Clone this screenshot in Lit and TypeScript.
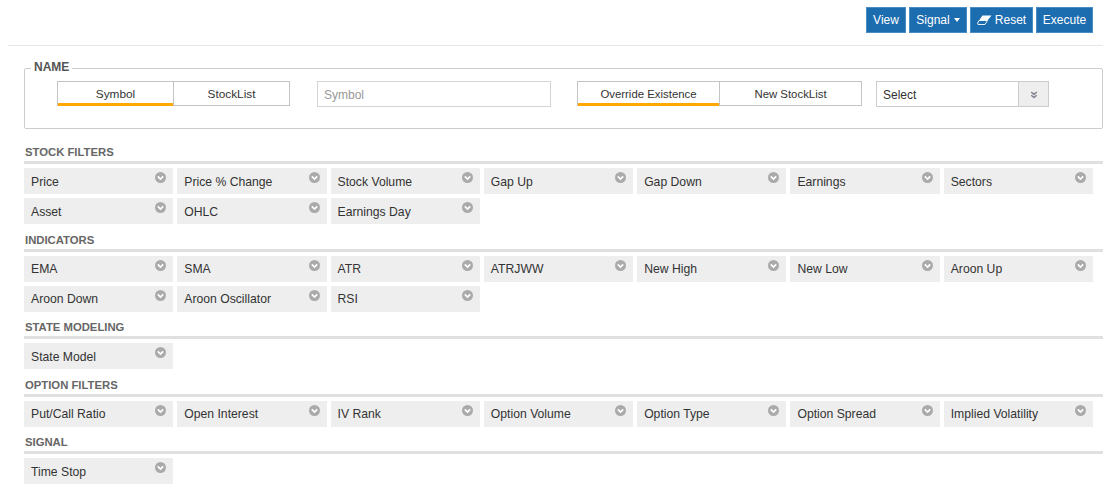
import { LitElement, html, css, svg } from "lit";
import { customElement } from "lit/decorators.js";

const sections: [string, string[]][] = [
  ["STOCK FILTERS", ["Price", "Price % Change", "Stock Volume", "Gap Up", "Gap Down", "Earnings", "Sectors", "Asset", "OHLC", "Earnings Day"]],
  ["INDICATORS", ["EMA", "SMA", "ATR", "ATRJWW", "New High", "New Low", "Aroon Up", "Aroon Down", "Aroon Oscillator", "RSI"]],
  ["STATE MODELING", ["State Model"]],
  ["OPTION FILTERS", ["Put/Call Ratio", "Open Interest", "IV Rank", "Option Volume", "Option Type", "Option Spread", "Implied Volatility"]],
  ["SIGNAL", ["Time Stop"]],
];

@customElement("app-root")
export class AppRoot extends LitElement {
  static styles = css`
    :host { display: block; font-family: "Liberation Sans", Arial, sans-serif; font-size: 12px; color: #333; }
    .top { display: flex; justify-content: flex-end; gap: 3px; padding: 7px 10px 12px 0; margin: 0 6px 0 8px; border-bottom: 1px solid #e6e6e6; }
    .btn { height: 26px; box-sizing: border-box; background: #1c6cb0; border: 1px solid #4a8cc4; color: #fff; font-size: 12px; display: flex; align-items: center; justify-content: center; gap: 3px; }
    .view { width: 40px; }
    .signal { width: 58px; }
    .reset { width: 63px; }
    .execute { width: 57px; }
    .caret { width: 0; height: 0; border-left: 3.5px solid transparent; border-right: 3.5px solid transparent; border-top: 4px solid #fff; margin-left: 1px; }
    fieldset { margin: 14px 6px 0 24px; padding: 0; height: 69px; box-sizing: border-box; border: 1px solid #ccc; border-radius: 2px; display: block; min-width: 0; }
    legend { font-weight: bold; font-size: 12px; color: #555; padding: 0 3px 3px 3px; margin-left: 6px; line-height: 14px; }
    .row { display: flex; align-items: flex-start; margin-top: 4px; }
    .seg { display: flex; box-sizing: border-box; height: 25px; border: 1px solid #c4c4c4; background: #fff; }
    .seg > div { display: flex; align-items: center; justify-content: center; box-sizing: border-box; color: #333; }
    .seg > div + div { border-left: 1px solid #c4c4c4; }
    .seg .on { border-bottom: 3px solid #ffa800; padding-top: 3px; height: 24px; }
    .seg1 { margin-left: 32px; width: 233px; font-size: 11.8px; }
    .seg1 > div:first-child { width: 115px; }
    .seg1 > div:last-child { flex: 1; }
    .seg2 { margin-left: 26px; width: 285px; font-size: 11.4px; }
    .seg2 > div:first-child { width: 141px; }
    .seg2 > div:last-child { flex: 1; }
    .input { margin-left: 27px; width: 234px; height: 26px; box-sizing: border-box; border: 1px solid #d4d4d4; color: #999; padding: 1px 6px 0; display: flex; align-items: center; font-size: 12px; }
    .select { margin-left: 14px; width: 173px; height: 26px; box-sizing: border-box; border: 1px solid #ccc; display: flex; }
    .select .v { flex: 1; display: flex; align-items: center; padding: 1px 6px 0; font-size: 12px; }
    .select .a { width: 29px; background: #eee; border-left: 1px solid #ccc; display: flex; align-items: center; justify-content: center; padding-top: 1px; }
    .sections { margin: 17px 16px 0 24px; }
    h3 { margin: 0 -10px 0 0; padding: 0 0 3px 1px; font-size: 11.3px; line-height: 12px; font-weight: bold; color: #666; border-bottom: 3px solid #e0e0e0; }
    .grid { display: grid; grid-template-columns: repeat(7, 1fr); column-gap: 4px; row-gap: 4px; margin: 4px 0 9.5px; }
    .tile { height: 26px; box-sizing: border-box; background: #eee; position: relative; display: flex; align-items: center; padding: 1px 7px 0; font-size: 12.2px; color: #333; }
    .tile svg { position: absolute; right: 7px; top: 4px; }
  `;

  chev() {
    return html`<svg width="11" height="11" viewBox="0 0 11 11"><circle cx="5.5" cy="5.5" r="5.5" fill="#aaa"></circle>${svg`<path d="M2.8 4.3 5.5 7 8.2 4.3" fill="none" stroke="#fff" stroke-width="1.7"></path>`}</svg>`;
  }

  render() {
    return html`
      <div class="top">
        <div class="btn view">View</div>
        <div class="btn signal">Signal <span class="caret"></span></div>
        <div class="btn reset"><svg width="15" height="10" viewBox="0 0 15 10"><path d="M5.5 .5 H14.5 L10.5 5.5 H2 Z" fill="#fff"></path><path d="M2 5.5 H10.5 L8 9.5 H1 L.7 8 Z" fill="none" stroke="#fff" stroke-width=".9"></path></svg> Reset</div>
        <div class="btn execute">Execute</div>
      </div>
      <fieldset>
        <legend>NAME</legend>
        <div class="row">
          <div class="seg seg1"><div class="on">Symbol</div><div>StockList</div></div>
          <div class="input">Symbol</div>
          <div class="seg seg2"><div class="on">Override Existence</div><div>New StockList</div></div>
          <div class="select"><div class="v">Select</div><div class="a"><svg width="8" height="8" viewBox="0 0 8 8"><path d="M1.2 1 4 3.4 6.8 1 M1.2 4.2 4 6.6 6.8 4.2" fill="none" stroke="#86808f" stroke-width="1.5"></path></svg></div></div>
        </div>
      </fieldset>
      <div class="sections">
        ${sections.map(([t, items]) => html`
          <h3>${t}</h3>
          <div class="grid">${items.map((i) => html`<div class="tile">${i}${this.chev()}</div>`)}</div>
        `)}
      </div>
    `;
  }
}
